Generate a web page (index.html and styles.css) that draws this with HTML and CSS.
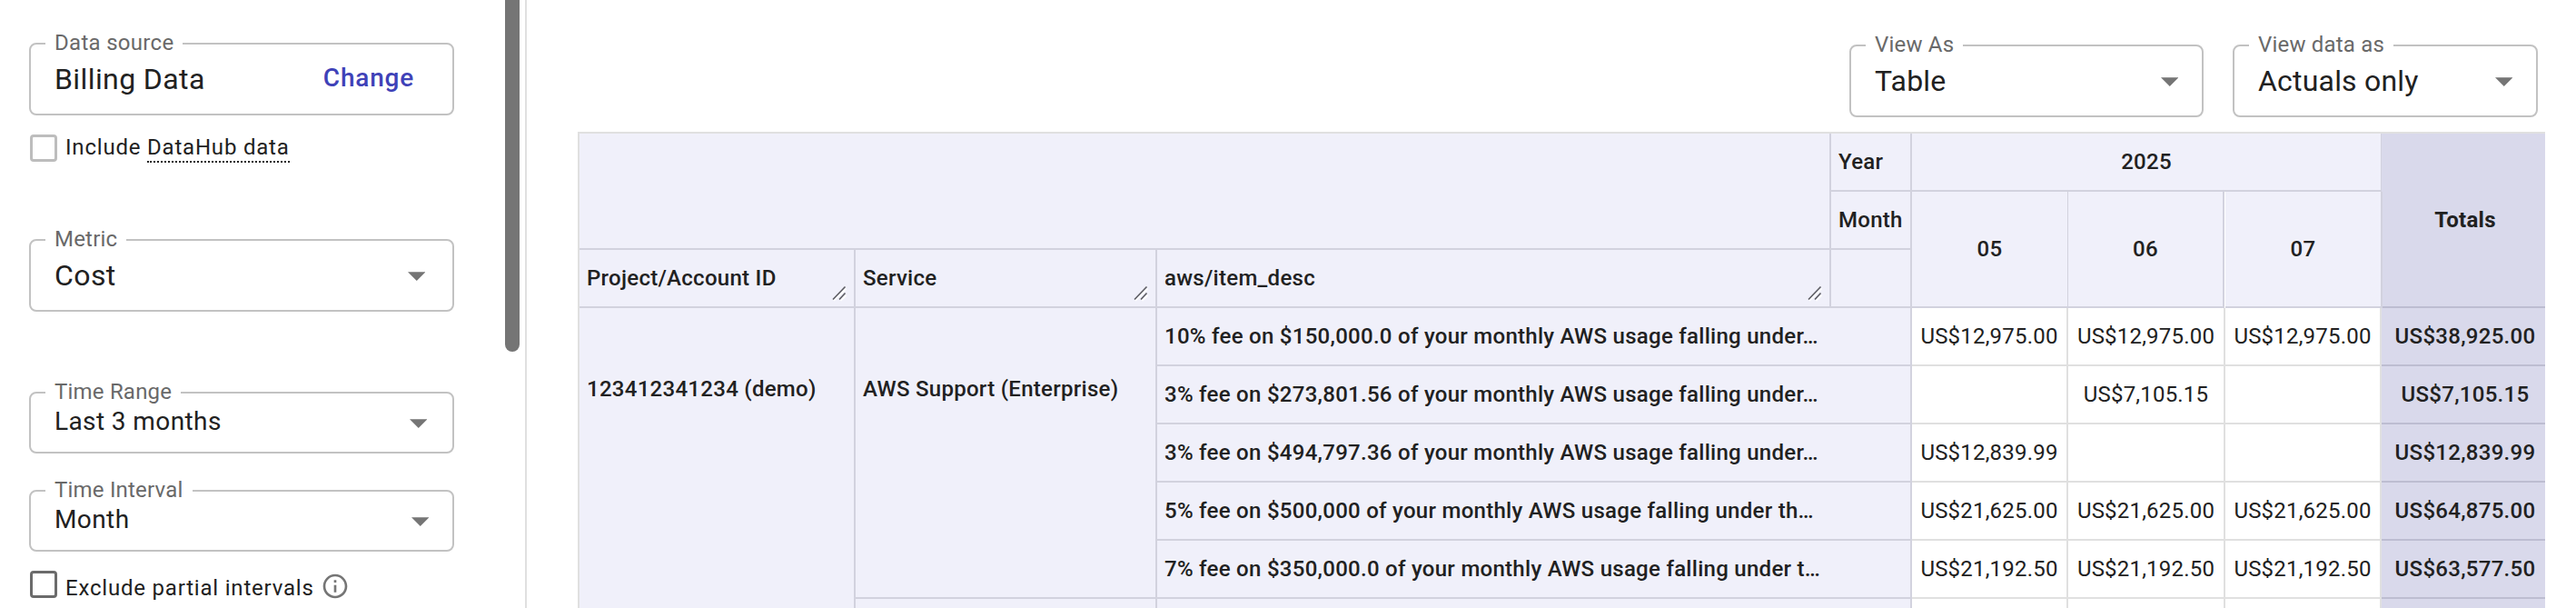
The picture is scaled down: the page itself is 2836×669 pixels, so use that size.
FILE: index.html
```html
<!DOCTYPE html>
<html lang="en">
<head>
<meta charset="utf-8">
<title>Billing report</title>
<link rel="stylesheet" href="styles.css">
</head>
<body>
<div class="page">
  <aside class="sidebar">
    <div class="field tall source">
      <span class="label">Data source</span>
      <span class="value">Billing Data</span>
      <a class="change">Change</a>
    </div>
    <div class="check include">
      <span class="box disabled"></span>
      <span class="check-text">Include <span class="hint">DataHub data</span></span>
    </div>
    <div class="field tall metric">
      <span class="label">Metric</span>
      <span class="value">Cost</span>
      <svg class="arrow" viewBox="0 0 20 10"><path d="M0 0h20L10 10z"/></svg>
    </div>
    <div class="field short range">
      <span class="label">Time Range</span>
      <span class="value">Last 3 months</span>
      <svg class="arrow" viewBox="0 0 20 10"><path d="M0 0h20L10 10z"/></svg>
    </div>
    <div class="field short interval">
      <span class="label">Time Interval</span>
      <span class="value">Month</span>
      <svg class="arrow" viewBox="0 0 20 10"><path d="M0 0h20L10 10z"/></svg>
    </div>
    <div class="check exclude">
      <span class="box"></span>
      <span class="check-text">Exclude partial intervals</span>
      <svg class="info" viewBox="0 0 24 24"><path d="M11 7h2v2h-2zm0 4h2v6h-2zm1-9C6.48 2 2 6.480 2 12s4.480 10 10 10 10-4.480 10-10S17.520 2 12 2zm0 18c-4.410 0-8-3.590-8-8s3.590-8 8-8 8 3.590 8 8-3.590 8-8 8z"/></svg>
    </div>
    <div class="scrollbar"></div>
  </aside>

  <main class="main">
    <div class="toolbar">
      <div class="field tall view-as">
        <span class="label">View As</span>
        <span class="value">Table</span>
        <svg class="arrow" viewBox="0 0 20 10"><path d="M0 0h20L10 10z"/></svg>
      </div>
      <div class="field tall view-data">
        <span class="label">View data as</span>
        <span class="value">Actuals only</span>
        <svg class="arrow" viewBox="0 0 20 10"><path d="M0 0h20L10 10z"/></svg>
      </div>
    </div>

    <div class="pivot">
      <div class="cell head corner"></div>
      <div class="cell head">Year</div>
      <div class="cell head center year">2025</div>
      <div class="cell total total-head">Totals</div>
      <div class="cell head">Month</div>
      <div class="cell head center month m05">05</div>
      <div class="cell head center month m06">06</div>
      <div class="cell head center month m07">07</div>
      <div class="cell head">Project/Account ID<svg class="grip" viewBox="0 0 18 18"><path class="shine" d="M4 17 17.500 3.500M11.500 17l6-6"/><path d="M3 15.500 16.500 1.500M10 15.500l6.500-7"/></svg></div>
      <div class="cell head">Service<svg class="grip" viewBox="0 0 18 18"><path class="shine" d="M4 17 17.500 3.500M11.500 17l6-6"/><path d="M3 15.500 16.500 1.500M10 15.500l6.500-7"/></svg></div>
      <div class="cell head">aws/item_desc<svg class="grip" viewBox="0 0 18 18"><path class="shine" d="M4 17 17.500 3.500M11.500 17l6-6"/><path d="M3 15.500 16.500 1.500M10 15.500l6.500-7"/></svg></div>
      <div class="cell head"></div>

      <div class="cell head group project">123412341234 (demo)</div>
      <div class="cell head group service">AWS Support (Enterprise)</div>

      <div class="cell head desc">10% fee on $150,000.0 of your monthly AWS usage falling under…</div>
      <div class="cell">US$12,975.00</div>
      <div class="cell">US$12,975.00</div>
      <div class="cell">US$12,975.00</div>
      <div class="cell total">US$38,925.00</div>

      <div class="cell head desc">3% fee on $273,801.56 of your monthly AWS usage falling under…</div>
      <div class="cell"></div>
      <div class="cell">US$7,105.15</div>
      <div class="cell"></div>
      <div class="cell total">US$7,105.15</div>

      <div class="cell head desc">3% fee on $494,797.36 of your monthly AWS usage falling under…</div>
      <div class="cell">US$12,839.99</div>
      <div class="cell"></div>
      <div class="cell"></div>
      <div class="cell total">US$12,839.99</div>

      <div class="cell head desc">5% fee on $500,000 of your monthly AWS usage falling under th…</div>
      <div class="cell">US$21,625.00</div>
      <div class="cell">US$21,625.00</div>
      <div class="cell">US$21,625.00</div>
      <div class="cell total">US$64,875.00</div>

      <div class="cell head desc">7% fee on $350,000.0 of your monthly AWS usage falling under t…</div>
      <div class="cell">US$21,192.50</div>
      <div class="cell">US$21,192.50</div>
      <div class="cell">US$21,192.50</div>
      <div class="cell total">US$63,577.50</div>

      <div class="cell head"></div>
      <div class="cell head desc"></div>
      <div class="cell"></div>
      <div class="cell"></div>
      <div class="cell"></div>
      <div class="cell total"></div>
    </div>
  </main>
</div>
</body>
</html>
```
FILE: styles.css
```css
* { box-sizing: border-box; }

body {
  margin: 0;
  background: #fff;
  color: #212121;
  font-family: Roboto, "Liberation Sans", sans-serif;
  font-size: 24px;
  line-height: 28px;
}

.page {
  display: flex;
  height: 669px;
  overflow: hidden;
}

/* Sidebar */
.sidebar {
  position: relative;
  flex: none;
  width: 580px;
  padding: 47px 78px 0 32px;
  border-right: 2px solid #e0e0e0;
}

.scrollbar {
  position: absolute;
  top: -10px;
  right: 6px;
  width: 16px;
  height: 397px;
  border-radius: 8px;
  background: #757575;
}

/* Outlined fields */
.field {
  position: relative;
  display: flex;
  justify-content: space-between;
  align-items: flex-start;
  border: 2px solid #c2c2c2;
  border-radius: 8px;
  padding-left: 26px;
}

.tall { height: 80px; padding-top: 19px; }
.short { height: 68px; padding-top: 14px; }

.label {
  position: absolute;
  top: -16px;
  left: 16px;
  padding: 0 10px;
  background: #fff;
  color: #696969;
  letter-spacing: 0.2px;
}

.value { white-space: nowrap; letter-spacing: 0.4px; }
.tall .value { font-size: 32px; line-height: 38px; }
.short .value { font-size: 28px; line-height: 34px; }

.arrow {
  width: 19.5px;
  height: 10px;
  fill: #757575;
}
.tall .arrow { margin-top: 15px; }
.short .arrow { margin-top: 14px; }

.source { padding-right: 42px; }
.source .label { letter-spacing: 0.3px; }
.metric { margin-top: 85px; padding-right: 30px; }
.range { margin-top: 88px; padding-right: 28px; }
.interval { margin-top: 40px; padding-right: 26px; }

.change {
  margin-top: 1px;
  color: #3f42b8;
  font-size: 28px;
  font-weight: 500;
  line-height: 34px;
  letter-spacing: 0.8px;
}

/* Checkbox rows */
.check {
  display: flex;
  align-items: flex-start;
  height: 30px;
  margin-top: 21px;
  padding-left: 1px;
  letter-spacing: 0.8px;
}

.box {
  width: 30px;
  height: 30px;
  margin-right: 9px;
  border: 3px solid #6b6b6b;
  border-radius: 4px;
}
.disabled { border-color: #bdbdbd; }

.check-text { white-space: nowrap; }
.hint {
  display: inline-block;
  height: 31px;
  border-bottom: 2px dotted #212121;
}
.exclude .check-text { margin-top: 5px; }

.info {
  width: 32px;
  height: 32px;
  margin: 1px 0 0 7px;
  fill: #757575;
}

/* Report area */
.main {
  flex: none;
  width: 2256px;
  padding: 49px 34px 0 56px;
}

.toolbar {
  display: flex;
  justify-content: flex-end;
  gap: 32px;
  height: 96px;
  padding-right: 8px;
}
.view-as { width: 390px; padding-right: 26px; }
.view-data { width: 336px; padding-right: 26px; }
.toolbar .value { letter-spacing: 0.2px; }

/* Pivot table */
.pivot {
  display: grid;
  grid-template-columns: 304px 332px 742px 89px 172px 173px 172px 180px;
  grid-auto-rows: 64px;
  border-top: 2px solid #e0e0e0;
  border-left: 2px solid #e0e0e0;
}

.cell {
  position: relative;
  display: flex;
  align-items: center;
  justify-content: center;
  border-right: 2px solid #e0e0e0;
  border-bottom: 2px solid #e0e0e0;
  white-space: nowrap;
  letter-spacing: 0.2px;
}

.head {
  justify-content: flex-start;
  padding-left: 8px;
  background: #f0f0fa;
  border-color: #d2d2de;
  font-weight: 500;
  letter-spacing: 0.28px;
}

.center { justify-content: center; padding-left: 0; }
.corner { grid-column: 1 / 4; grid-row: 1 / 3; }
.year { grid-column: 5 / 8; border-right-width: 1px; }
.month { grid-row: 2 / 4; }
.m05 { grid-column: 5; border-right-width: 1px; }
.m06 { grid-column: 6; margin-right: 1px; }
.m07 { grid-column: 7; margin-right: -1px; z-index: 1; }

.total {
  padding-left: 4px;
  border-right: 0;
  border-bottom-color: #bdbdd1;
  background: #d9d9eb;
  font-weight: 500;
  letter-spacing: 0.28px;
}
.total-head { grid-column: 8; grid-row: 1 / 4; font-weight: 700; }

.group { align-items: flex-start; padding-top: 75px; }
.project { grid-column: 1; grid-row: 4 / 10; }
.service { grid-column: 2; grid-row: 4 / 9; }
.desc { grid-column: 3 / 5; }

.grip {
  position: absolute;
  right: 8px;
  bottom: 5px;
  width: 18px;
  height: 18px;
  fill: none;
  stroke: #5c5c62;
  stroke-width: 1.6;
}
.grip .shine { stroke: #fff; }
```
